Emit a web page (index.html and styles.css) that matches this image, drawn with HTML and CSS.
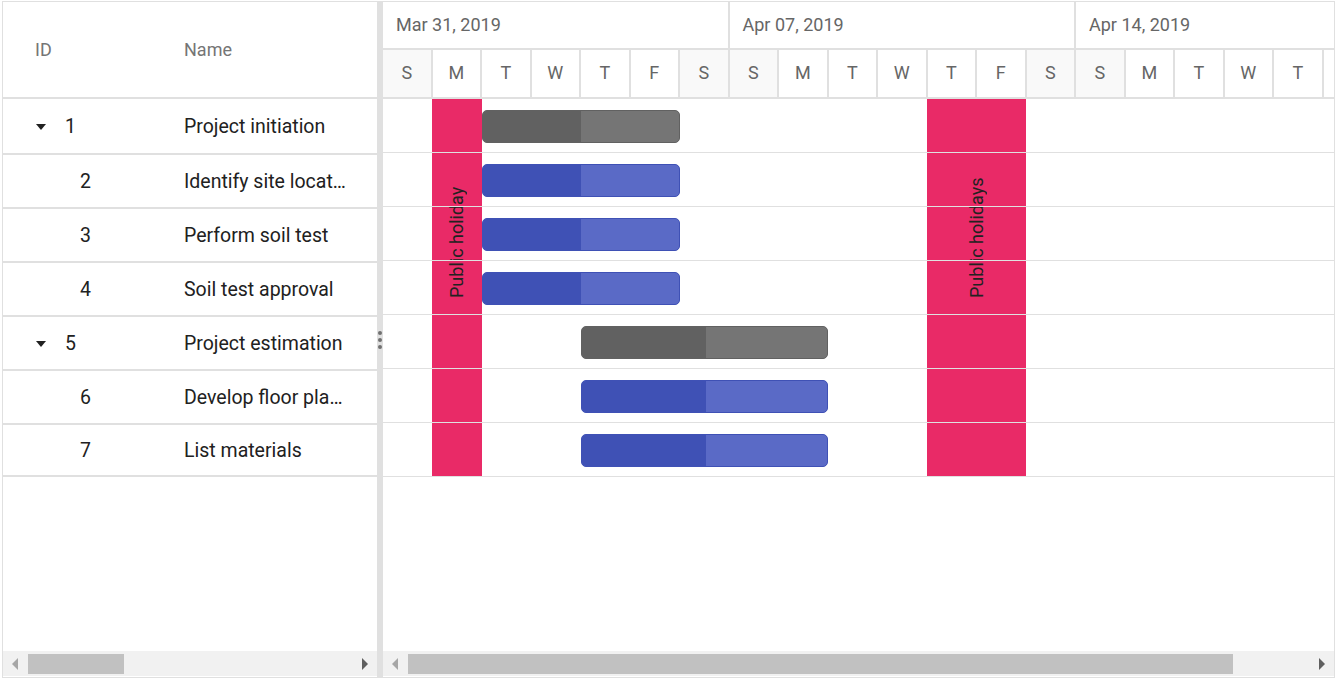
FILE: index.html
```html
<!DOCTYPE html>
<html lang="en">
<head>
    <meta charset="UTF-8">
    <meta name="viewport" content="width=device-width, initial-scale=1.0">
    <title>Project Gantt</title>
    <link rel="stylesheet" href="styles.css">
</head>
<body>
    <div class="gantt">
        <!-- Tree grid -->
        <div class="grid-pane">
            <div class="grid-header">
                <div class="col-id">ID</div>
                <div class="col-name">Name</div>
            </div>
            <div class="grid-body">
                <div class="grid-row">
                    <div class="col-id"><span class="caret"></span>1</div>
                    <div class="col-name">Project initiation</div>
                </div>
                <div class="grid-row">
                    <div class="col-id"><span class="indent"></span>2</div>
                    <div class="col-name">Identify site location</div>
                </div>
                <div class="grid-row">
                    <div class="col-id"><span class="indent"></span>3</div>
                    <div class="col-name">Perform soil test</div>
                </div>
                <div class="grid-row">
                    <div class="col-id"><span class="indent"></span>4</div>
                    <div class="col-name">Soil test approval</div>
                </div>
                <div class="grid-row">
                    <div class="col-id"><span class="caret"></span>5</div>
                    <div class="col-name">Project estimation</div>
                </div>
                <div class="grid-row">
                    <div class="col-id"><span class="indent"></span>6</div>
                    <div class="col-name">Develop floor plan for estimation</div>
                </div>
                <div class="grid-row">
                    <div class="col-id"><span class="indent"></span>7</div>
                    <div class="col-name">List materials</div>
                </div>
            </div>
            <div class="hscroll">
                <div class="scroll-btn"><span class="arrow-left"></span></div>
                <div class="scroll-track"><div class="scroll-thumb grid-thumb"></div></div>
                <div class="scroll-btn"><span class="arrow-right"></span></div>
            </div>
        </div>

        <div class="splitter">
            <span class="dot"></span>
            <span class="dot"></span>
            <span class="dot"></span>
        </div>

        <!-- Timeline chart -->
        <div class="chart-pane">
            <div class="timeline">
                <div class="tier-weeks">
                    <div class="week">Mar 31, 2019</div>
                    <div class="week">Apr 07, 2019</div>
                    <div class="week">Apr 14, 2019</div>
                </div>
                <div class="tier-days">
                    <div class="day weekend">S</div>
                    <div class="day">M</div>
                    <div class="day">T</div>
                    <div class="day">W</div>
                    <div class="day">T</div>
                    <div class="day">F</div>
                    <div class="day weekend">S</div>
                    <div class="day weekend">S</div>
                    <div class="day">M</div>
                    <div class="day">T</div>
                    <div class="day">W</div>
                    <div class="day">T</div>
                    <div class="day">F</div>
                    <div class="day weekend">S</div>
                    <div class="day weekend">S</div>
                    <div class="day">M</div>
                    <div class="day">T</div>
                    <div class="day">W</div>
                    <div class="day">T</div>
                </div>
            </div>
            <div class="chart-body">
                <div class="holiday" style="left: 49px; width: 49.5px;">
                    <span class="holiday-label">Public holiday</span>
                </div>
                <div class="holiday" style="left: 544px; width: 99px;">
                    <span class="holiday-label">Public holidays</span>
                </div>

                <div class="chart-row">
                    <div class="bar parent" style="left: 99px; width: 198px;"><div class="bar-progress" style="width: 50%;"></div></div>
                </div>
                <div class="chart-row">
                    <div class="bar" style="left: 99px; width: 198px;"><div class="bar-progress" style="width: 50%;"></div></div>
                </div>
                <div class="chart-row">
                    <div class="bar" style="left: 99px; width: 198px;"><div class="bar-progress" style="width: 50%;"></div></div>
                </div>
                <div class="chart-row">
                    <div class="bar" style="left: 99px; width: 198px;"><div class="bar-progress" style="width: 50%;"></div></div>
                </div>
                <div class="chart-row">
                    <div class="bar parent" style="left: 198px; width: 247px;"><div class="bar-progress" style="width: 50.5%;"></div></div>
                </div>
                <div class="chart-row">
                    <div class="bar" style="left: 198px; width: 247px;"><div class="bar-progress" style="width: 50.5%;"></div></div>
                </div>
                <div class="chart-row">
                    <div class="bar" style="left: 198px; width: 247px;"><div class="bar-progress" style="width: 50.5%;"></div></div>
                </div>
            </div>
            <div class="hscroll">
                <div class="scroll-btn"><span class="arrow-left"></span></div>
                <div class="scroll-track"><div class="scroll-thumb chart-thumb"></div></div>
                <div class="scroll-btn"><span class="arrow-right"></span></div>
            </div>
        </div>
    </div>
</body>
</html>
```

FILE: styles.css
```css
body {
    margin: 0;
    padding: 1px 0 0 2px;
    font-family: Roboto, "Noto Sans", sans-serif;
    background-color: #fff;
}
.gantt {
    display: flex;
    width: 1331px;
    height: 675px;
    border: 1px solid #e0e0e0;
}

/* Tree grid */
.grid-pane {
    width: 374px;
    display: flex;
    flex-direction: column;
}
.grid-header {
    height: 95px;
    display: flex;
    align-items: center;
    border-bottom: 2px solid #e0e0e0;
    font-size: 18px;
    color: #757575;
}
.grid-header .col-name {
    padding-bottom: 1px;
}
.col-id {
    width: 167px;
    box-sizing: border-box;
    padding-left: 32px;
    display: flex;
    align-items: center;
}
.col-name {
    flex: 1;
    min-width: 0;
    padding: 0 28px 0 14px;
    white-space: nowrap;
    overflow: hidden;
    text-overflow: ellipsis;
}
.grid-body {
    flex: 1;
}
.grid-row {
    height: 52px;
    display: flex;
    align-items: center;
    border-bottom: 2px solid #e0e0e0;
    font-size: 19.5px;
    color: #212121;
}
.grid-row:first-child {
    height: 54px;
}
.grid-row:last-child {
    height: 50px;
}
.caret {
    width: 0;
    height: 0;
    border-left: 5px solid transparent;
    border-right: 5px solid transparent;
    border-top: 6px solid #212121;
    margin: 1px 19px 0 1px;
}
.indent {
    width: 45px;
}

/* Splitter */
.splitter {
    width: 6px;
    background-color: #e0e0e0;
    display: flex;
    flex-direction: column;
    align-items: center;
    justify-content: center;
    gap: 3px;
}
.dot {
    width: 4px;
    height: 4px;
    border-radius: 50%;
    background-color: #707070;
}

/* Timeline chart */
.chart-pane {
    flex: 1;
    min-width: 0;
    display: flex;
    flex-direction: column;
    overflow: hidden;
}
.timeline {
    font-size: 18px;
    color: #666;
}
.tier-weeks {
    display: flex;
    height: 46px;
    border-bottom: 2px solid #e0e0e0;
}
.week {
    flex: 0 0 346.5px;
    box-sizing: border-box;
    padding: 0 0 2px 13px;
    border-right: 2px solid #e0e0e0;
    display: flex;
    align-items: center;
}
.tier-days {
    display: flex;
    height: 47px;
    border-bottom: 2px solid #e0e0e0;
}
.day {
    flex: 0 0 49.5px;
    box-sizing: border-box;
    padding-bottom: 2px;
    border-right: 2px solid #e0e0e0;
    display: flex;
    align-items: center;
    justify-content: center;
}
.day.weekend {
    background-color: #f9f9f9;
}
.chart-body {
    flex: 1;
    position: relative;
}
.holiday {
    position: absolute;
    top: 0;
    height: 378px;
    background-color: #e92a67;
    display: flex;
    justify-content: center;
}
.holiday-label {
    writing-mode: vertical-rl;
    transform: rotate(180deg);
    height: 199px;
    font-size: 18px;
    color: #222;
    white-space: nowrap;
}
.chart-row {
    position: relative;
    height: 53px;
    border-bottom: 1px solid #e0e0e0;
}
.bar {
    position: absolute;
    top: 11px;
    height: 33px;
    box-sizing: border-box;
    border: 1px solid #3f51b5;
    border-radius: 5px;
    background-color: #5a6ac6;
    overflow: hidden;
}
.bar-progress {
    height: 100%;
    background-color: #3f51b5;
}
.bar.parent {
    border-color: #616161;
    background-color: #757575;
}
.bar.parent .bar-progress {
    background-color: #616161;
}

/* Scrollbars */
.hscroll {
    height: 25px;
    margin-bottom: 1px;
    display: flex;
    background-color: #f1f1f1;
}
.scroll-btn {
    width: 24px;
    display: flex;
    align-items: center;
    justify-content: center;
}
.arrow-left {
    border-top: 6px solid transparent;
    border-bottom: 6px solid transparent;
    border-right: 6px solid #a6a6a6;
}
.arrow-right {
    border-top: 6px solid transparent;
    border-bottom: 6px solid transparent;
    border-left: 6px solid #5f5f5f;
}
.scroll-track {
    flex: 1;
    display: flex;
    align-items: center;
}
.scroll-thumb {
    height: 20px;
    margin-left: 1px;
    background-color: #c1c1c1;
}
.grid-thumb {
    width: 96px;
}
.chart-thumb {
    width: 825px;
}
```
